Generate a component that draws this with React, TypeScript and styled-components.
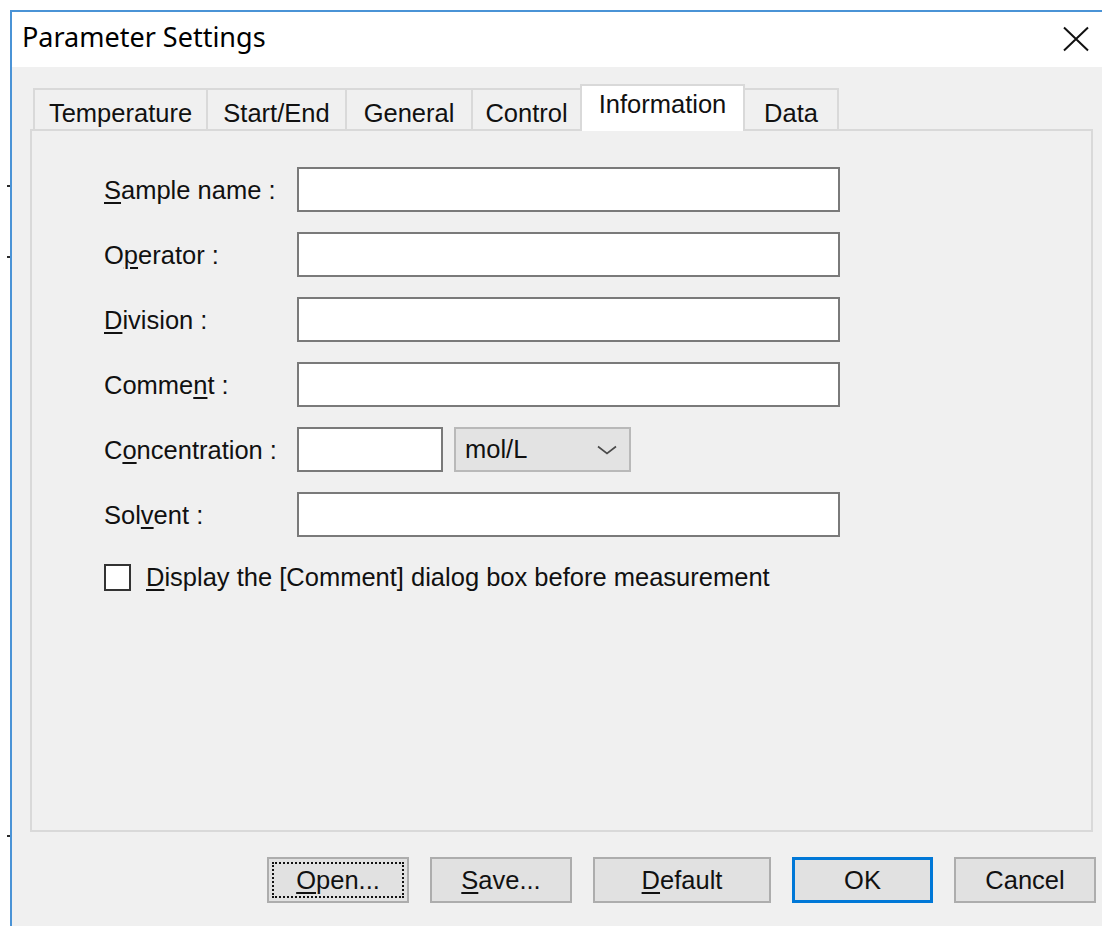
import React from 'react'
import styled, { createGlobalStyle } from 'styled-components'

const GlobalStyle = createGlobalStyle`
  html, body {
    margin: 0;
    padding: 0;
    background: #ffffff;
    overflow: hidden;
  }
`

const UI_FONT = `"Liberation Sans", Arial, sans-serif`
const CAPTION_FONT = `"Noto Sans", "Open Sans", sans-serif`

type Hot = [string, string, string]

const tabs: { label: Hot; width: number; active?: boolean }[] = [
  { label: ['Temperature', '', ''], width: 175 },
  { label: ['Start/End', '', ''], width: 141 },
  { label: ['General', '', ''], width: 128 },
  { label: ['Control', '', ''], width: 111 },
  { label: ['Information', '', ''], width: 165, active: true },
  { label: ['Data', '', ''], width: 96 },
]

const fields: { label: Hot; unit?: boolean }[] = [
  { label: ['', 'S', 'ample name :'] },
  { label: ['O', 'p', 'erator :'] },
  { label: ['', 'D', 'ivision :'] },
  { label: ['Comme', 'n', 't :'] },
  { label: ['C', 'o', 'ncentration :'], unit: true },
  { label: ['Sol', 'v', 'ent :'] },
]

const buttons: { label: Hot; width: number; focused?: boolean; primary?: boolean }[] = [
  { label: ['', 'O', 'pen...'], width: 142, focused: true },
  { label: ['', 'S', 'ave...'], width: 142 },
  { label: ['', 'D', 'efault'], width: 178 },
  { label: ['OK', '', ''], width: 141, primary: true },
  { label: ['Cancel', '', ''], width: 142 },
]

const HotText = ({ parts }: { parts: Hot }) => (
  <>
    {parts[0]}
    {parts[1] && <Hotkey>{parts[1]}</Hotkey>}
    {parts[2]}
  </>
)

export default function App() {
  return (
    <Page>
      <GlobalStyle />
      <Gutter>
        <Tick $gap={185} />
        <Tick $gap={69} />
        <Tick $gap={577} />
      </Gutter>
      <Window>
        <TitleBar>
          <Caption>Parameter Settings</Caption>
          <CloseGlyph width="28" height="26" viewBox="0 0 28 26">
            <path d="M2 1.5 L26 24.5 M26 1.5 L2 24.5" stroke="#111" strokeWidth="2" fill="none" />
          </CloseGlyph>
        </TitleBar>

        <Body>
          <TabStrip>
            {tabs.map((t) => (
              <Tab key={t.label[0]} $width={t.width} $active={!!t.active}>
                <HotText parts={t.label} />
              </Tab>
            ))}
          </TabStrip>

          <Panel>
            <Form>
              {fields.map((f) => (
                <React.Fragment key={f.label.join('')}>
                  <FieldLabel>
                    <HotText parts={f.label} />
                  </FieldLabel>
                  {f.unit ? (
                    <UnitGroup>
                      <TextBox $width={146} />
                      <Combo>
                        <span>mol/L</span>
                        <svg width="20" height="10" viewBox="0 0 20 10">
                          <polyline points="1,1.5 10,8.5 19,1.5" stroke="#4a4a4a" strokeWidth="1.6" fill="none" />
                        </svg>
                      </Combo>
                    </UnitGroup>
                  ) : (
                    <TextBox $width={543} />
                  )}
                </React.Fragment>
              ))}
              <CheckRow>
                <CheckBox />
                <span>
                  <Hotkey>D</Hotkey>isplay the [Comment] dialog box before measurement
                </span>
              </CheckRow>
            </Form>
          </Panel>

          <ButtonRow>
            {buttons.map((b) => (
              <PushButton key={b.label.join('')} $width={b.width} $focused={!!b.focused} $primary={!!b.primary}>
                <HotText parts={b.label} />
              </PushButton>
            ))}
          </ButtonRow>
        </Body>
      </Window>
    </Page>
  )
}

const Page = styled.div`
  display: flex;
  width: 1102px;
  height: 926px;
  overflow: hidden;
  background: #ffffff;
`

const Gutter = styled.div`
  display: flex;
  flex-direction: column;
  flex-shrink: 0;
  width: 10px;
`

const Tick = styled.div<{ $gap: number }>`
  width: 3px;
  height: 2px;
  margin-top: ${(p) => p.$gap}px;
  margin-left: 7px;
  background: #2a2a2a;
`

const Window = styled.div`
  display: flex;
  flex-direction: column;
  flex-shrink: 0;
  width: 1090px;
  height: 930px;
  margin-top: 10px;
  border: 2px solid #4a93d6;
  border-bottom: none;
`

const TitleBar = styled.div`
  display: flex;
  align-items: center;
  justify-content: space-between;
  height: 55px;
  padding: 0 12px 0 10px;
  background: #ffffff;
`

const Caption = styled.span`
  margin-bottom: 6px;
  font-family: ${CAPTION_FONT};
  font-size: 27px;
  color: #000000;
`

const CloseGlyph = styled.svg`
  display: block;
  margin-bottom: 1px;
`

const Body = styled.div`
  flex: 1;
  padding: 17px 9px 0 18px;
  background: #f0f0f0;
  font-family: ${UI_FONT};
  font-size: 25.5px;
  line-height: 29px;
  color: #111111;
`

const Hotkey = styled.u`
  text-decoration-thickness: 2px;
  text-underline-offset: 3px;
`

const TabStrip = styled.div`
  display: flex;
  align-items: flex-end;
  height: 45px;
  margin-left: 3px;
`

const Tab = styled.div<{ $width: number; $active: boolean }>`
  position: relative;
  z-index: ${(p) => (p.$active ? 1 : 0)};
  box-sizing: border-box;
  width: ${(p) => p.$width}px;
  height: ${(p) => (p.$active ? 47 : 41)}px;
  margin-left: -2px;
  margin-bottom: ${(p) => (p.$active ? -2 : 0)}px;
  padding-top: ${(p) => (p.$active ? 4 : 9)}px;
  border: 2px solid #d9d9d9;
  border-bottom: none;
  background: ${(p) => (p.$active ? '#ffffff' : '#f0f0f0')};
  text-align: center;
  white-space: nowrap;

  &:first-child {
    margin-left: 0;
  }
`

const Panel = styled.div`
  box-sizing: border-box;
  height: 703px;
  padding: 36px 0 0 72px;
  border: 2px solid #d9d9d9;
  background: #f0f0f0;
`

const Form = styled.div`
  display: grid;
  grid-template-columns: 193px auto;
  grid-auto-rows: 45px;
  row-gap: 20px;
  align-items: center;
  justify-content: start;
`

const FieldLabel = styled.label`
  padding-top: 2px;
  white-space: nowrap;
`

const TextBox = styled.div<{ $width: number }>`
  box-sizing: border-box;
  width: ${(p) => p.$width}px;
  height: 45px;
  border: 2px solid #7a7a7a;
  background: #ffffff;
`

const UnitGroup = styled.div`
  display: flex;
  gap: 11px;
`

const Combo = styled.div`
  display: flex;
  align-items: center;
  justify-content: space-between;
  box-sizing: border-box;
  width: 177px;
  height: 45px;
  padding: 0 12px 0 9px;
  border: 2px solid #b9b9b9;
  background: #e3e3e3;
`

const CheckRow = styled.div`
  grid-column: 1 / -1;
  display: flex;
  align-items: center;
  gap: 15px;
  height: 29px;
  margin-top: -4px;
  white-space: nowrap;
`

const CheckBox = styled.div`
  box-sizing: border-box;
  width: 27px;
  height: 27px;
  border: 2px solid #333333;
  background: #ffffff;
`

const ButtonRow = styled.div`
  display: flex;
  justify-content: flex-end;
  gap: 21px;
  margin: 25px -3px 0 0;
`

const PushButton = styled.div<{ $width: number; $focused: boolean; $primary: boolean }>`
  position: relative;
  display: flex;
  align-items: center;
  justify-content: center;
  box-sizing: border-box;
  width: ${(p) => p.$width}px;
  height: 46px;
  border: 2px solid ${(p) => (p.$primary ? '#0078d7' : '#adadad')};
  box-shadow: ${(p) => (p.$primary ? 'inset 0 0 0 1px #0078d7' : 'none')};
  background: #e1e1e1;
  white-space: nowrap;

  ${(p) =>
    p.$focused &&
    `
    &::after {
      content: '';
      position: absolute;
      inset: 3px;
      border: 2px dotted #111111;
    }
  `}
`
